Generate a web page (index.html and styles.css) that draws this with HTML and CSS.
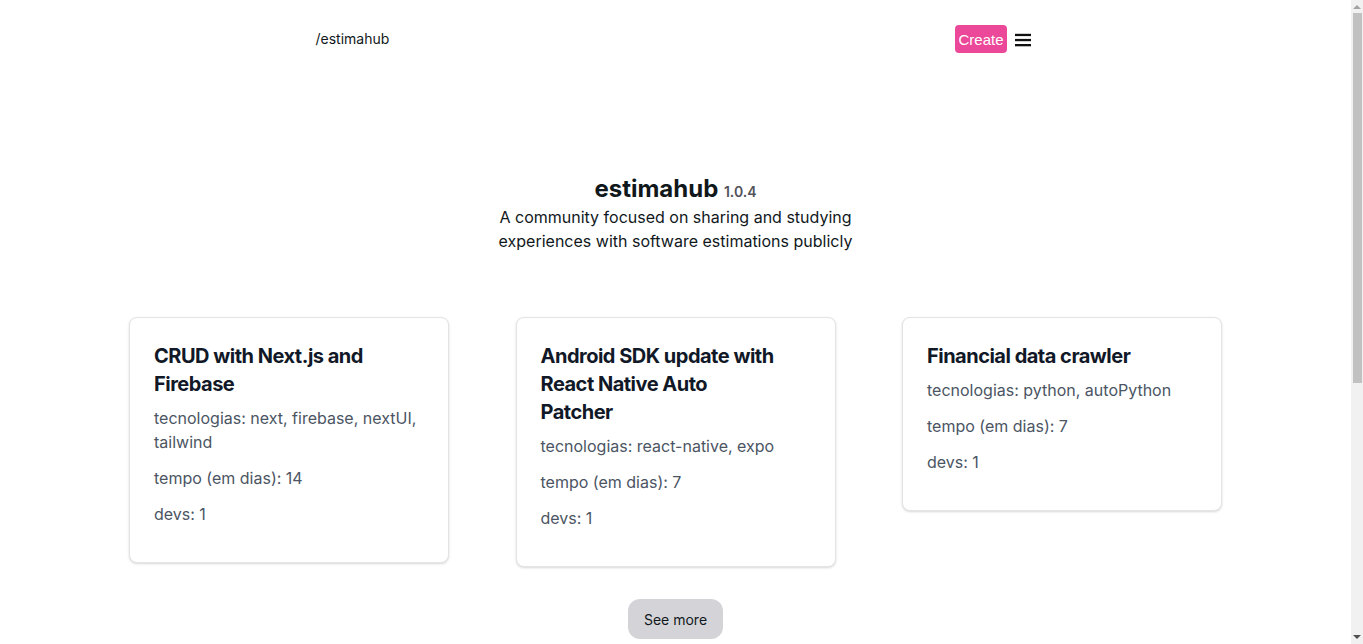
FILE: index.html
```html
<!DOCTYPE html>
<html lang="en">
<head>
<meta charset="utf-8">
<title>estimahub</title>
<link rel="stylesheet" href="styles.css">
</head>
<body>
<div class="page">
  <nav class="nav">
    <a class="brand" href="#">/estimahub</a>
    <div class="nav-actions">
      <button class="create-btn">Create</button>
      <button class="menu-btn" aria-label="menu">
        <svg width="16" height="14" viewBox="0 0 16 14"><rect x="0" y="0.8" width="16" height="2.3" fill="#111"/><rect x="0" y="5.9" width="16" height="2.3" fill="#111"/><rect x="0" y="11" width="16" height="2.3" fill="#111"/></svg>
      </button>
    </div>
  </nav>

  <header class="hero">
    <h1 class="title">estimahub <span class="version">1.0.4</span></h1>
    <p class="subtitle">A community focused on sharing and studying experiences with software estimations publicly</p>
  </header>

  <section class="cards">
    <article class="card">
      <h2 class="card-title">CRUD with Next.js and Firebase</h2>
      <p class="card-line">tecnologias: next, firebase, nextUI, tailwind</p>
      <p class="card-line">tempo (em dias): 14</p>
      <p class="card-line">devs: 1</p>
    </article>
    <article class="card">
      <h2 class="card-title">Android SDK update with React Native Auto Patcher</h2>
      <p class="card-line">tecnologias: react-native, expo</p>
      <p class="card-line">tempo (em dias): 7</p>
      <p class="card-line">devs: 1</p>
    </article>
    <article class="card">
      <h2 class="card-title">Financial data crawler</h2>
      <p class="card-line">tecnologias: python, autoPython</p>
      <p class="card-line">tempo (em dias): 7</p>
      <p class="card-line">devs: 1</p>
    </article>
  </section>

  <div class="more">
    <button class="more-btn">See more</button>
  </div>
</div>
<div class="scrollbar" aria-hidden="true">
  <div class="sb-arrow sb-up"></div>
  <div class="sb-track"><div class="sb-thumb"></div></div>
  <div class="sb-arrow sb-down"></div>
</div>
</body>
</html>
```

FILE: styles.css
```css
* { box-sizing: border-box; }
html, body { margin: 0; padding: 0; }
body {
  font-family: Inter, "Noto Sans", sans-serif;
  color: #11181c;
  background: #ffffff;
  padding-right: 12px;
}
.page {
  min-height: 1077px;
  display: flex;
  flex-direction: column;
}
.nav {
  width: 100%;
  max-width: 768px;
  margin: 0 auto;
  padding: 25px 24px 0;
  display: flex;
  align-items: center;
  justify-content: space-between;
  height: 53px;
}
.brand {
  font-size: 14px;
  color: #11181c;
  text-decoration: none;
  line-height: 28px;
}
.nav-actions {
  display: flex;
  align-items: center;
  gap: 8px;
  margin-right: 4.5px;
}
.create-btn {
  font-family: "Liberation Sans", Arial, sans-serif;
  font-size: 15px;
  color: #ffffff;
  background: #ec4899;
  border: none;
  border-radius: 4px;
  height: 28px;
  padding: 0 3.5px;
  cursor: pointer;
}
.menu-btn {
  background: none;
  border: none;
  padding: 0;
  width: 16px;
  height: 14px;
  display: flex;
  margin-top: 2px;
}
.hero {
  margin-top: 120px;
  display: flex;
  flex-direction: column;
  align-items: center;
  text-align: center;
}
.title {
  margin: 0;
  font-size: 24px;
  line-height: 32px;
  font-weight: 700;
  color: #11181c;
}
.version {
  font-size: 14px;
  line-height: 1;
  font-weight: 600;
  color: #52525b;
}
.subtitle {
  margin: 0;
  max-width: 384px;
  font-size: 16px;
  line-height: 24px;
  color: #11181c;
}
.cards {
  margin-top: 64px;
  display: grid;
  grid-template-columns: repeat(3, 320px);
  column-gap: 66.5px;
  justify-content: center;
  align-items: start;
}
.card {
  border: 1px solid #e4e4e7;
  border-radius: 8px;
  padding: 24px;
  background: #fff;
  box-shadow: 0 1px 3px rgba(0,0,0,0.10), 0 1px 2px rgba(0,0,0,0.06);
}
.card-title {
  margin: 0 0 8px;
  max-width: 238px;
  font-size: 20px;
  line-height: 28px;
  font-weight: 700;
  letter-spacing: -0.5px;
  color: #111827;
}
.card-line {
  margin: 0 0 12px;
  font-size: 16px;
  line-height: 24px;
  color: #4b5563;
}
.more {
  margin-top: 32px;
  display: flex;
  justify-content: center;
}
.more-btn {
  font-family: Inter, "Noto Sans", sans-serif;
  font-size: 14px;
  color: #11181c;
  background: #d4d4d8;
  border: none;
  border-radius: 12px;
  height: 40px;
  padding: 0 16px;
  min-width: 80px;
  cursor: pointer;
}
.scrollbar {
  position: fixed;
  top: 0;
  right: 0;
  width: 12px;
  height: 100vh;
  background: #f1f1f1;
  display: flex;
  flex-direction: column;
  align-items: center;
}
.sb-arrow {
  width: 0;
  height: 0;
  border-left: 4px solid transparent;
  border-right: 4px solid transparent;
  flex: none;
}
.sb-up {
  border-bottom: 4px solid #a3a3a3;
  margin: 5px 0 4px;
}
.sb-down {
  border-top: 4px solid #505050;
  margin: 4px 0 5px;
}
.sb-track {
  flex: 1;
  width: 100%;
  display: flex;
  justify-content: center;
}
.sb-thumb {
  width: 9px;
  height: 370px;
  background: #c1c1c1;
}
```
